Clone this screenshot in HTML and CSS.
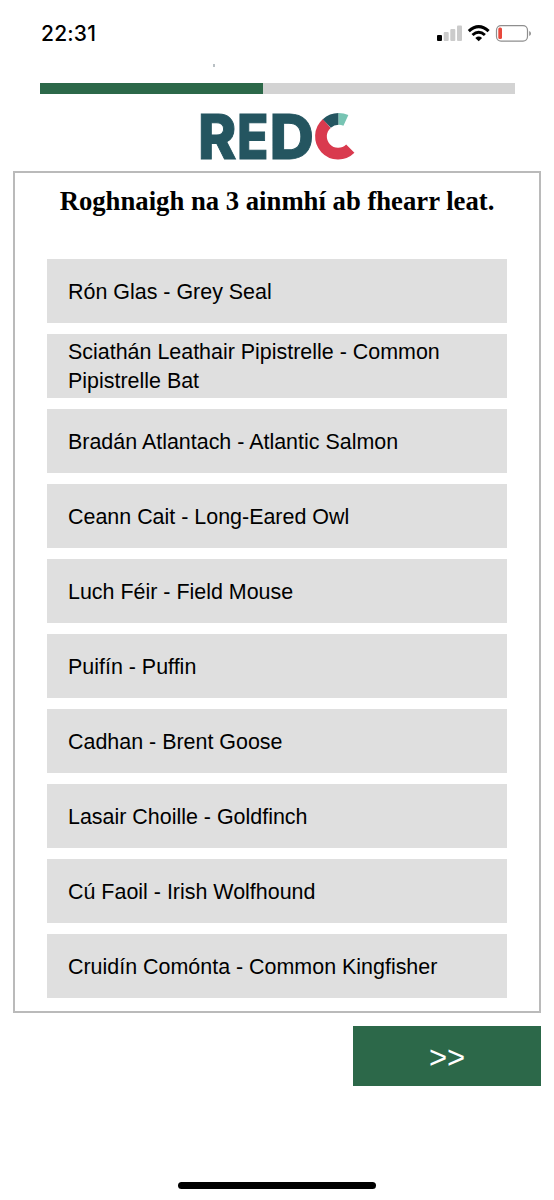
FILE: index.html
```html
<!DOCTYPE html>
<html lang="ga">

<head>
    <meta charset="UTF-8" />
    <meta name="viewport" content="width=device-width, initial-scale=1.0" />
    <title>RED C</title>
    <link rel="stylesheet" href="styles.css">
</head>

<body>
    <!-- status bar -->
    <div class="status">
        <span class="time">22:31</span>
        <svg class="status-icons" width="96" height="20" viewBox="0 0 96 20">
            <rect x="1" y="12" width="5" height="6" rx="1" fill="#000" />
            <g fill="#cbcbcb">
                <rect x="7.700" y="9" width="5" height="9" rx="1" />
                <rect x="14.300" y="6" width="5" height="12" rx="1" />
                <rect x="21" y="2.500" width="5" height="15.500" rx="1" />
            </g>
            <g fill="none" stroke="#000" stroke-width="3">
                <path d="M32.800 8.200Q42.700 -1 52.600 8.200" />
                <path d="M36.500 12Q42.700 6.500 48.900 12" />
            </g>
            <path d="M39.300 14.900Q42.700 12.200 46.100 14.900L42.700 18.200Z" />
            <rect x="60.500" y="2.700" width="31" height="15.400" rx="4.500" fill="none" stroke="#8e8e8e" stroke-width="1.200" />
            <rect x="62.300" y="4.500" width="3.700" height="11.600" rx="1.500" fill="#e8483c" />
            <path d="M93.200 8v5Q95 12.300 95 10.500T93.200 8Z" fill="#8e8e8e" />
        </svg>
    </div>
    <div class="tick"></div>

    <div class="progress">
        <div class="progress-bar"></div>
    </div>

    <svg class="logo" width="156" height="50" viewBox="0 0 156 50" role="img" aria-label="REDC">
        <g class="logo-text">
            <text x="-2" y="47.600" textLength="38.500" lengthAdjust="spacingAndGlyphs">R</text>
            <text x="37" y="47.600" textLength="31.500" lengthAdjust="spacingAndGlyphs">E</text>
            <text x="69.500" y="47.600" textLength="44.500" lengthAdjust="spacingAndGlyphs">D</text>
        </g>
        <!-- ring of the C -->
        <g fill="none" stroke-width="11.700">
            <path d="M150.300 37.600A17.200 17.200 0 1 1 126.800 12.500" stroke="#d93a4e" />
            <path d="M126.800 12.500A17.200 17.200 0 0 1 138.600 7.800" stroke="#245560" />
            <path d="M138.600 7.800A17.200 17.200 0 0 1 145.900 9.400" stroke="#77c4b3" />
        </g>
    </svg>

    <div class="question">
        <h1>Roghnaigh na 3 ainmhí ab fhearr leat.</h1>
        <ul>
            <li>Rón Glas - Grey Seal</li>
            <li>Sciathán Leathair Pipistrelle - Common Pipistrelle Bat</li>
            <li>Bradán Atlantach - Atlantic Salmon</li>
            <li>Ceann Cait - Long-Eared Owl</li>
            <li>Luch Féir - Field Mouse</li>
            <li>Puifín - Puffin</li>
            <li>Cadhan - Brent Goose</li>
            <li>Lasair Choille - Goldfinch</li>
            <li>Cú Faoil - Irish Wolfhound</li>
            <li>Cruidín Comónta - Common Kingfisher</li>
        </ul>
    </div>

    <button class="next">&gt;&gt;</button>
    <div class="home-bar"></div>
</body>

</html>
```
FILE: styles.css
```css
* {
    margin: 0;
    padding: 0;
    box-sizing: border-box;
}

body {
    display: flex;
    flex-direction: column;
    height: 1200px;
    overflow: hidden;
    background-color: #fff;
    font-family: "Liberation Sans", Arial, sans-serif;
}

li {
    list-style: none;
}

.status {
    display: flex;
    justify-content: space-between;
    height: 64px;
    padding: 23px 22px 0 41px;
}

.time {
    font: 500 21px/21px Inter, sans-serif;
    letter-spacing: 0.2px;
}

.status-icons {
    display: block;
}

.tick {
    width: 2px;
    height: 3px;
    margin-left: 213px;
    background-color: #b9c0c4;
}

.progress {
    width: 475px;
    height: 11px;
    margin: 16px 0 0 39.500px;
    background-color: #d3d3d3;
}

.progress-bar {
    width: 47%;
    height: 11px;
    background-color: #2c6849;
}

.logo {
    display: block;
    overflow: visible;
    margin: 17px 0 0 200px;
}

.logo-text {
    fill: #245560;
    stroke: #245560;
    stroke-width: 1px;
    font: 800 62px Inter, sans-serif;
}

.question {
    width: 528px;
    height: 842px;
    margin: 10px 0 0 13px;
    padding: 10px 32px 0;
    border: 2px solid #bababa;
}

.question h1 {
    height: 76px;
    font: bold 26.700px/36px "Liberation Serif", "Times New Roman", serif;
    text-align: center;
    white-space: nowrap;
}

.question ul {
    display: flex;
    flex-direction: column;
    gap: 11px;
}

.question li {
    display: flex;
    align-items: center;
    height: 64px;
    padding: 2px 21px 0;
    background-color: #dfdfdf;
    font-size: 21.450px;
    line-height: 29px;
}

.next {
    width: 188px;
    height: 60px;
    margin: 13px 0 0 353px;
    padding-top: 4px;
    border: none;
    background-color: #2c6849;
    color: #fff;
    font: 31px "Liberation Sans", Arial, sans-serif;
}

.home-bar {
    width: 198px;
    height: 7px;
    margin: 96px 0 0 178px;
    border-radius: 4px;
    background-color: #000;
}
```
